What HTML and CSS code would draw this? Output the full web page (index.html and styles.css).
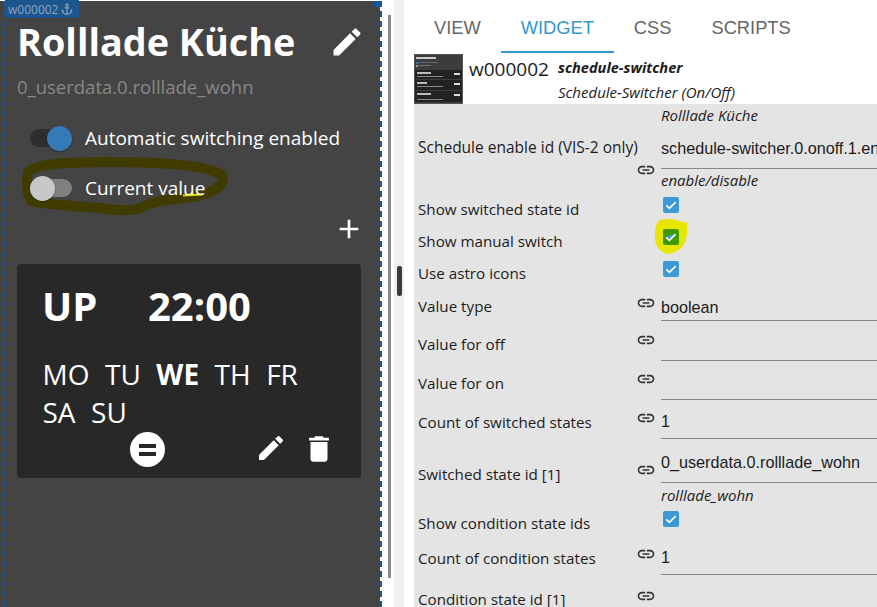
FILE: index.html
```html
<!DOCTYPE html>
<html lang="de">
<head>
<meta charset="utf-8">
<title>Schedule switcher</title>
<link rel="stylesheet" href="styles.css">
</head>
<body>
<svg class="defs" width="0" height="0" aria-hidden="true">
  <symbol id="i-pencil" viewBox="0 0 24 24"><path d="M3 17.25V21h3.75L17.81 9.94l-3.75-3.75L3 17.25zM20.71 7.04c.39-.39.39-1.02 0-1.41l-2.34-2.34c-.39-.39-1.02-.39-1.41 0l-1.83 1.83 3.75 3.75 1.83-1.83z"/></symbol>
  <symbol id="i-plus" viewBox="0 0 24 24"><path d="M19 13h-6v6h-2v-6H5v-2h6V5h2v6h6v2z"/></symbol>
  <symbol id="i-trash" viewBox="0 0 24 24"><path d="M6 19c0 1.1.9 2 2 2h8c1.1 0 2-.9 2-2V7H6v12zM19 4h-3.5l-1-1h-5l-1 1H5v2h14V4z"/></symbol>
  <symbol id="i-link" viewBox="0 0 24 24"><path d="M3.9 12c0-1.71 1.39-3.1 3.1-3.1h4V7H7c-2.76 0-5 2.24-5 5s2.24 5 5 5h4v-1.9H7c-1.71 0-3.1-1.39-3.1-3.1zM8 13h8v-2H8v2zm9-6h-4v1.9h4c1.71 0 3.1 1.39 3.1 3.1s-1.39 3.1-3.1 3.1h-4V17h4c2.76 0 5-2.24 5-5s-2.24-5-5-5z"/></symbol>
  <symbol id="i-anchor" viewBox="0 0 24 24"><path d="M17 15l1.55 1.55c-.96 1.69-3.33 3.04-5.55 3.37V11h3V9h-3V7.82C14.16 7.4 15 6.3 15 5c0-1.65-1.35-3-3-3S9 3.35 9 5c0 1.3.84 2.4 2 2.82V9H8v2h3v8.92c-2.22-.33-4.59-1.68-5.55-3.37L7 15l-4-3v3c0 3.88 4.92 7 9 7s9-3.12 9-7v-3l-4 3zM12 4c.55 0 1 .45 1 1s-.45 1-1 1-1-.45-1-1 .45-1 1-1z"/></symbol>
  <symbol id="i-check" viewBox="0 0 24 24"><path d="M5 12.5l4.6 4.6L19 7.7" fill="none" stroke="#fff" stroke-width="2.4"/></symbol>
</svg>

<main class="app">
  <section class="canvas">
    <div class="widget">
      <div class="badge">w000002<svg class="badge-icon"><use href="#i-anchor"/></svg></div>
      <div class="corner"></div>
      <header class="title-row">
        <h1 class="title">Rolllade Küche</h1>
        <svg class="title-edit"><use href="#i-pencil"/></svg>
      </header>
      <div class="subtitle">0_userdata.0.rolllade_wohn</div>
      <div class="toggle-row">
        <span class="toggle on"><span class="knob"></span></span>
        <span class="toggle-label">Automatic switching enabled</span>
      </div>
      <div class="toggle-row">
        <span class="toggle off"><span class="knob"></span></span>
        <span class="toggle-label">Current value</span>
      </div>
      <div class="add-row"><svg class="add"><use href="#i-plus"/></svg></div>
      <article class="card">
        <div class="card-head"><span class="mode">UP</span><span>22:00</span></div>
        <div class="days">
          <span>MO</span><span>TU</span><b>WE</b><span>TH</span><span>FR</span><span>SA</span><span>SU</span>
        </div>
        <div class="card-actions">
          <span class="round"><span class="bars"></span></span>
          <svg class="act-edit"><use href="#i-pencil"/></svg>
          <svg class="act-del"><use href="#i-trash"/></svg>
        </div>
      </article>
    </div>
    <svg class="scribble" viewBox="0 0 240 72" aria-hidden="true">
      <path class="olive" d="M28 22 C36 13 70 12 110 12 C150 12 205 14 222 25 C226 34 215 42 198 46 C180 49 155 50 147 55 C135 62 120 61 100 58 C70 56 45 54 31 51 C26 40 26 30 28 22 Z"/>
      <path class="yellow" d="M183 45.500 L202 44.500 M37 47 Q42 48.500 48 47"/>
    </svg>
    <div class="scrollbar"></div>
  </section>

  <div class="splitter"><span class="handle"></span></div>

  <section class="panel">
    <nav class="tabs">
      <a class="tab">VIEW</a>
      <a class="tab active">WIDGET</a>
      <a class="tab">CSS</a>
      <a class="tab">SCRIPTS</a>
    </nav>
    <div class="widget-head">
      <svg class="thumb" viewBox="0 0 49 50" aria-hidden="true">
        <rect width="49" height="50" fill="#555"/>
        <rect x="1" y="1" width="47" height="48" fill="#3c3c3c"/>
        <rect x="2" y="3" width="20" height="2" fill="#ccc"/>
        <rect x="4" y="8" width="20" height="1" fill="#667"/>
        <rect x="2" y="8" width="2" height="2" fill="#37a"/>
        <rect x="2" y="11" width="2" height="2" fill="#999"/>
        <rect x="5" y="11" width="12" height="1" fill="#777"/>
        <rect x="1" y="16" width="47" height="9" fill="#222"/>
        <rect x="1" y="26" width="47" height="10" fill="#222"/>
        <rect x="1" y="37" width="47" height="11" fill="#222"/>
        <rect x="3" y="18" width="14" height="2" fill="#bbb"/>
        <rect x="3" y="22" width="26" height="1" fill="#888"/>
        <rect x="3" y="28" width="10" height="2" fill="#bbb"/>
        <rect x="3" y="32" width="26" height="1" fill="#888"/>
        <rect x="3" y="39" width="14" height="2" fill="#bbb"/>
        <rect x="3" y="45" width="26" height="1" fill="#888"/>
        <rect x="40" y="19" width="6" height="2" fill="#ddd"/>
        <rect x="40" y="29" width="6" height="2" fill="#ddd"/>
        <rect x="40" y="40" width="6" height="2" fill="#ddd"/>
      </svg>
      <div class="widget-id">w000002</div>
      <div class="widget-type">
        <strong>schedule-switcher</strong>
        <em>Schedule-Switcher (On/Off)</em>
      </div>
    </div>

    <div class="props">
      <div class="row r-enable">
        <label class="lbl">Schedule enable id (VIS-2 only)</label>
        <svg class="link"><use href="#i-link"/></svg>
        <div class="val">
          <em class="hint">Rolllade Küche</em>
          <div class="field">schedule-switcher.0.onoff.1.enabled</div>
          <em class="hint">enable/disable</em>
        </div>
      </div>
      <div class="row r-check"><label class="lbl">Show switched state id</label><span></span><span class="cb"><svg><use href="#i-check"/></svg></span></div>
      <div class="row r-check"><label class="lbl">Show manual switch</label><span></span><span class="cb marked"><svg viewBox="0 0 16 16"><path class="smear" d="M2 9 L8 5.500 L13 5 L9 10 L6 11 Z"/><use href="#i-check" width="16" height="16"/></svg></span></div>
      <div class="row r-check"><label class="lbl">Use astro icons</label><span></span><span class="cb"><svg><use href="#i-check"/></svg></span></div>
      <div class="row r-type"><label class="lbl">Value type</label><svg class="link"><use href="#i-link"/></svg><div class="val"><div class="field">boolean</div></div></div>
      <div class="row r-off"><label class="lbl">Value for off</label><svg class="link"><use href="#i-link"/></svg><div class="val"><div class="field"></div></div></div>
      <div class="row r-on"><label class="lbl">Value for on</label><svg class="link"><use href="#i-link"/></svg><div class="val"><div class="field"></div></div></div>
      <div class="row r-on"><label class="lbl">Count of switched states</label><svg class="link"><use href="#i-link"/></svg><div class="val"><div class="field">1</div></div></div>
      <div class="row r-state">
        <label class="lbl">Switched state id [1]</label>
        <svg class="link"><use href="#i-link"/></svg>
        <div class="val"><div class="field">0_userdata.0.rolllade_wohn</div><em class="hint">rolllade_wohn</em></div>
      </div>
      <div class="row r-cond-check"><label class="lbl">Show condition state ids</label><span></span><span class="cb"><svg><use href="#i-check"/></svg></span></div>
      <div class="row r-cond-count"><label class="lbl">Count of condition states</label><svg class="link"><use href="#i-link"/></svg><div class="val"><div class="field">1</div></div></div>
      <div class="row r-cond-id"><label class="lbl">Condition state id [1]</label><svg class="link"><use href="#i-link"/></svg><div class="val"></div></div>
    </div>
    <svg class="marker" viewBox="0 0 36 38" aria-hidden="true">
      <path d="M5 3 C12 -1 24 2 34 5 C35 12 34 18 33 21 C31 30 24 36 14 37 C6 36 0 28 1 16 C1 10 2 6 5 3 Z"/>
    </svg>
  </section>
</main>
</body>
</html>
```
FILE: styles.css
```css
* { box-sizing: border-box; }
html, body { margin: 0; height: 100%; overflow: hidden; background: #fff; }
.defs { position: absolute; }
.app { display: flex; width: 877px; height: 607px; overflow: hidden; }

/* left canvas */
.canvas {
  position: relative; flex: 0 0 394px; padding: 1px 12px 0 3px;
  background: linear-gradient(#444, #444) 0 1px / 5px 100% no-repeat, #fff;
}
.widget {
  position: relative; height: 606px;
  background: #444; background-clip: padding-box;
  border-left: 2px dashed #14569c; border-right: 2px dashed #14569c;
  color: #fff;
  font-family: "Open Sans", sans-serif;
  padding: 0 19px 0 12px;
}
.badge {
  position: absolute; left: 0; top: -1px; height: 18px; width: 74px;
  display: flex; align-items: center; gap: 2px; padding-left: 3px;
  background: #1d568f; border-radius: 0 0 3px 3px;
  color: #8aa4bd; font-size: 12px;
}
.badge-icon { width: 14px; height: 14px; fill: #8aa4bd; }
.corner { position: absolute; right: 0; top: 0; width: 7px; height: 6px; background: #14569c; }
.title-row { display: flex; align-items: center; justify-content: space-between; height: 70px; padding-top: 12px; }
.title { margin: 0; font-size: 37.800px; font-weight: 700; line-height: 58px; white-space: nowrap; }
.title-edit { width: 36px; height: 36px; fill: #fff; margin-right: -4px; }
.subtitle { font-size: 18.500px; line-height: 30px; color: #888; margin-top: 1px; margin-bottom: 11px; }
.toggle-row { display: flex; align-items: center; height: 50px; padding-left: 13px; }
.toggle { position: relative; z-index: 2; display: inline-block; width: 42px; height: 18px; border-radius: 9px; flex: none; }
.toggle.on { background: #2e2e2e; }
.toggle.off { background: #808080; }
.knob { position: absolute; top: -3px; width: 25px; height: 25px; border-radius: 50%; box-shadow: 0 1px 2px rgba(0,0,0,.3); }
.on .knob { right: 0; background: #337ab7; }
.off .knob { left: 0; background: #c8c8c8; }
.toggle-label { position: relative; z-index: 2; margin-left: 13px; font-size: 19px; white-space: nowrap; }
.add-row { display: flex; justify-content: flex-end; height: 51px; }
.add { width: 32px; height: 32px; fill: #fff; margin-right: -4px; }
.card { background: #282828; border-radius: 4px; height: 214px; padding: 18px 27px 0 25px; position: relative; }
.card-head { display: flex; font-size: 40px; font-weight: 700; line-height: 48px; }
.mode { width: 106px; }
.days { display: flex; flex-wrap: wrap; column-gap: 15.500px; font-size: 28px; line-height: 38px; margin: 25px 0 0 0.500px; width: 290px; }
.days b { font-weight: 700; }
.card-actions { position: absolute; left: 0; right: 0; top: 165px; height: 40px; }
.round { position: absolute; left: 113px; top: 3px; width: 35px; height: 35px; border-radius: 50%; background: #fff; display: flex; align-items: center; justify-content: center; }
.bars { display: block; width: 17px; height: 12px; border-top: 4px solid #282828; border-bottom: 4px solid #282828; }
.act-edit { position: absolute; left: 238px; top: 3px; width: 32px; height: 32px; fill: #fff; }
.act-del { position: absolute; left: 285px; top: 3px; width: 34px; height: 34px; fill: #fff; }
.scribble { position: absolute; left: 0; top: 150px; width: 240px; height: 72px; pointer-events: none; }
.olive { fill: none; stroke: #403c00; stroke-width: 10; }
.yellow { fill: none; stroke: #dede00; stroke-width: 2; }
.scrollbar { position: absolute; left: 388px; top: 15px; width: 3px; height: 563px; background: #8b8b8b; }

.splitter { position: relative; flex: 0 0 10px; margin-right: 10px; background: #eef0f0; }
.handle { position: absolute; left: 3px; top: 266px; width: 5px; height: 30px; border-radius: 2px; background: #3a3a44; }

/* right panel */
.panel { position: relative; flex: 1 1 0; min-width: 0; overflow: hidden; background: #fff; color: #1c1c1c; }
.tabs { display: flex; height: 53px; font-family: "Liberation Sans", sans-serif; font-size: 18.300px; }
.tab { padding: 0 20px; line-height: 56px; color: #666; }
.tab.active { color: #3399cc; border-bottom: 2px solid #3399cc; }
.widget-head { display: flex; height: 51px; font-family: "Open Sans", sans-serif; }
.thumb { width: 49px; height: 50px; flex: none; margin-top: 1px; }
.widget-id { margin-left: 6px; font-size: 19px; line-height: 32px; width: 89px; }
.widget-type { display: flex; flex-direction: column; padding-top: 2px; font-size: 15px; font-style: italic; line-height: 25px; white-space: nowrap; }
.widget-type strong { font-size: 14.600px; font-weight: 700; }

.props { background: #e4e4e4; font-family: "Open Sans", sans-serif; font-size: 15.200px; }
.row { display: grid; grid-template-columns: 222px 25px 1fr; align-items: start; }
.lbl { padding-left: 4px; line-height: 20px; white-space: nowrap; margin-top: var(--label-top); }
.link { width: 20px; height: 20px; fill: #333; margin-top: var(--icon-top); }
.val { min-width: 0; white-space: nowrap; }
.field { border-bottom: 1px solid #888; font-family: "Liberation Sans", sans-serif; font-size: 16.200px; overflow: hidden; }
.hint { display: block; font-style: italic; font-size: 15px; line-height: 22px; }
.cb { position: relative; display: flex; width: 16px; height: 16px; margin-left: 2px; border-radius: 2px; background: #3a9ad4; }
.cb svg { width: 16px; height: 16px; }
.cb.marked { z-index: 2; background: #3f9a00; }
.smear { fill: #3a9ad4; }
.marker { position: absolute; left: 240px; top: 218px; width: 35px; height: 37px; z-index: 1; fill: #e6e600; }

.r-enable { height: 93px; --label-top: 33px; --icon-top: 56px; }
.r-enable .lbl { font-size: 15.500px; }
.r-enable .field { height: 43px; line-height: 44px; }
.r-check { height: 32px; --label-top: 2px; }
.r-type { height: 28px; --label-top: 3px; --icon-top: 0; }
.r-type .field { height: 28px; line-height: 28px; }
.r-off { height: 40px; --label-top: 13px; --icon-top: 9px; }
.r-off .field { height: 40px; }
.r-on { height: 39px; --label-top: 12px; --icon-top: 8px; }
.r-on .field { height: 39px; line-height: 42px; }
.r-state { height: 68px; --label-top: 25px; --icon-top: 21px; }
.r-state .field { height: 44px; line-height: 46px; }
.r-state .hint { margin-top: 1px; }
.r-cond-check { height: 32px; --label-top: 6px; }
.r-cond-check .cb { margin-top: 4px; }
.r-cond-count { height: 36px; --label-top: 9px; --icon-top: 5px; }
.r-cond-count .field { height: 36px; line-height: 36px; }
.r-cond-id { height: 32px; --label-top: 14px; --icon-top: 11px; }
```
